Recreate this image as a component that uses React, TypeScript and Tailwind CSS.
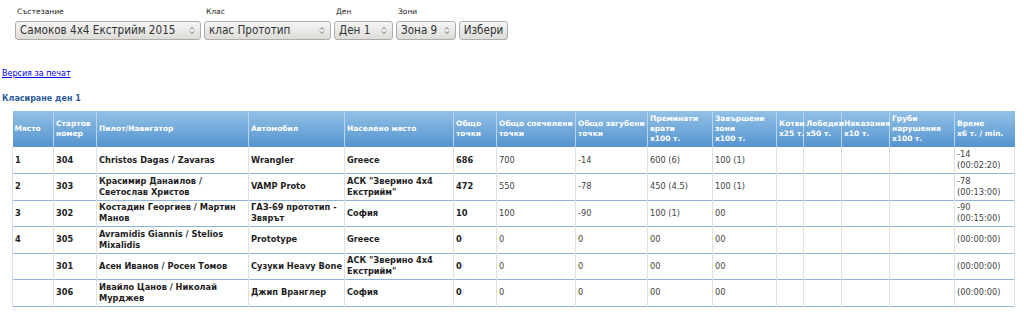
import React from "react";

const widths = [41, 43, 152, 96, 109, 43, 79, 72, 65, 64, 27, 38, 48, 65, 60];

const headers: string[][] = [
  ["Място"],
  ["Стартов", "номер"],
  ["Пилот/Навигатор"],
  ["Автомобил"],
  ["Населено място"],
  ["Общо", "точки"],
  ["Общо спечелени", "точки"],
  ["Общо загубени", "точки"],
  ["Преминати", "врати", "x100 т."],
  ["Завършени", "зони", "x100 т."],
  ["Котви", "x25 т."],
  ["Лебедки", "x50 т."],
  ["Наказания", "x10 т."],
  ["Груби", "нарушения", "x100 т."],
  ["Време", "x6 т. / min."],
];

type Row = string[][];

const rows: Row[] = [
  [["1"], ["304"], ["Christos Dagas / Zavaras"], ["Wrangler"], ["Greece"], ["686"], ["700"], ["-14"], ["600 (6)"], ["100 (1)"], [""], [""], [""], [""], ["-14", "(00:02:20)"]],
  [["2"], ["303"], ["Красимир Данаилов /", "Светослав Христов"], ["VAMP Proto"], ["АСК \"Зверино 4x4", "Екстрийм\""], ["472"], ["550"], ["-78"], ["450 (4.5)"], ["100 (1)"], [""], [""], [""], [""], ["-78", "(00:13:00)"]],
  [["3"], ["302"], ["Костадин Георгиев / Мартин", "Манов"], ["ГАЗ-69 прототип -", "Звярът"], ["София"], ["10"], ["100"], ["-90"], ["100 (1)"], ["00"], [""], [""], [""], [""], ["-90", "(00:15:00)"]],
  [["4"], ["305"], ["Avramidis Giannis / Stelios", "Mixalidis"], ["Prototype"], ["Greece"], ["0"], ["0"], ["0"], ["00"], ["00"], [""], [""], [""], [""], ["(00:00:00)"]],
  [[""], ["301"], ["Асен Иванов / Росен Томов"], ["Сузуки Heavy Bone"], ["АСК \"Зверино 4x4", "Екстрийм\""], ["0"], ["0"], ["0"], ["00"], ["00"], [""], [""], [""], [""], ["(00:00:00)"]],
  [[""], ["306"], ["Ивайло Цанов / Николай", "Мурджев"], ["Джип Вранглер"], ["София"], ["0"], ["0"], ["0"], ["00"], ["00"], [""], [""], [""], [""], ["(00:00:00)"]],
];

function Arrows() {
  return (
    <svg width="6" height="9" viewBox="0 0 6 9" className="shrink-0">
      <path d="M1 3.5 L3 1.5 L5 3.5" fill="none" stroke="#6a6a6a" strokeWidth="0.9" />
      <path d="M1 5.5 L3 7.5 L5 5.5" fill="none" stroke="#6a6a6a" strokeWidth="0.9" />
    </svg>
  );
}

const ctrlFont = { fontFamily: '"DejaVu Sans Condensed", "DejaVu Sans", sans-serif', fontStretch: "condensed" as const };

function Select({ label, value, width }: { label: string; value: string; width: string }) {
  return (
    <div className="flex flex-col">
      <div className="text-[7.5px] leading-[10px] text-[#222] pl-[2px] h-[14px]">{label}</div>
      <div
        style={ctrlFont}
        className={`${width} h-[19px] flex items-center justify-between pl-[4px] pr-[5px] border border-[#aeada9] rounded-[3px] bg-gradient-to-b from-[#f7f6f5] to-[#dedcd8] text-[11.6px] text-[#2e3436]`}
      >
        <span className="whitespace-nowrap">{value}</span>
        <Arrows />
      </div>
    </div>
  );
}

export default function App() {
  return (
    <div
      className="w-[1024px] h-[328px] bg-white overflow-hidden"
      style={{ fontFamily: '"DejaVu Sans", Verdana, sans-serif' }}
    >
      <div className="flex items-end gap-[3px] pl-[15px] pt-[7px]">
        <Select label="Състезание" value="Самоков 4x4 Екстрийм 2015" width="w-[186px]" />
        <Select label="Клас" value="клас Прототип" width="w-[127px]" />
        <Select label="Ден" value="Ден 1" width="w-[59px]" />
        <Select label="Зони" value="Зона 9" width="w-[60px]" />
        <div
          style={ctrlFont}
          className="h-[19px] w-[49px] flex items-center justify-center border border-[#aeada9] rounded-[3px] bg-gradient-to-b from-[#f7f6f5] to-[#dedcd8] text-[11.6px] text-[#2e3436]"
        >
          Избери
        </div>
      </div>

      <div className="pl-[2px] pt-[29px] text-[8px] leading-[10px]">
        <a className="text-[#0000ee] underline cursor-pointer">Версия за печат</a>
      </div>

      <div className="pl-[2px] pt-[15px] text-[8px] leading-[10px] font-bold text-[#2f5b98]">
        Класиране ден 1
      </div>

      <div className="pl-[12px] pt-[7px]">
        <table className="table-fixed border-collapse w-[1002px]">
          <colgroup>
            {widths.map((w, i) => (
              <col key={i} style={{ width: w }} />
            ))}
          </colgroup>
          <thead>
            <tr className="h-[36px] bg-gradient-to-b from-[#92c1e6] to-[#5594cf]">
              {headers.map((h, i) => (
                <th
                  key={i}
                  className="align-middle text-left font-bold text-white text-[7.5px] leading-[10px] px-[2px] border-l border-[#b9d5ee] first:border-l-0"
                >
                  {h.map((l, j) => (
                    <div key={j} className="whitespace-nowrap">{l}</div>
                  ))}
                </th>
              ))}
            </tr>
          </thead>
          <tbody>
            {rows.map((r, ri) => (
              <tr key={ri} className="h-[26.5px] border-b-[1.5px] border-[#8fb5da]">
                {r.map((c, ci) => (
                  <td
                    key={ci}
                    className={`align-middle px-[2px] text-[8.25px] leading-[11px] border-x border-[#dbe1e8] whitespace-nowrap ${
                      ci < 6 ? "font-bold text-[#1e1e1e]" : "text-[#444]"
                    }`}
                  >
                    {c.map((l, j) => (
                      <div key={j}>{l || "\u00a0"}</div>
                    ))}
                  </td>
                ))}
              </tr>
            ))}
          </tbody>
        </table>
      </div>
    </div>
  );
}
